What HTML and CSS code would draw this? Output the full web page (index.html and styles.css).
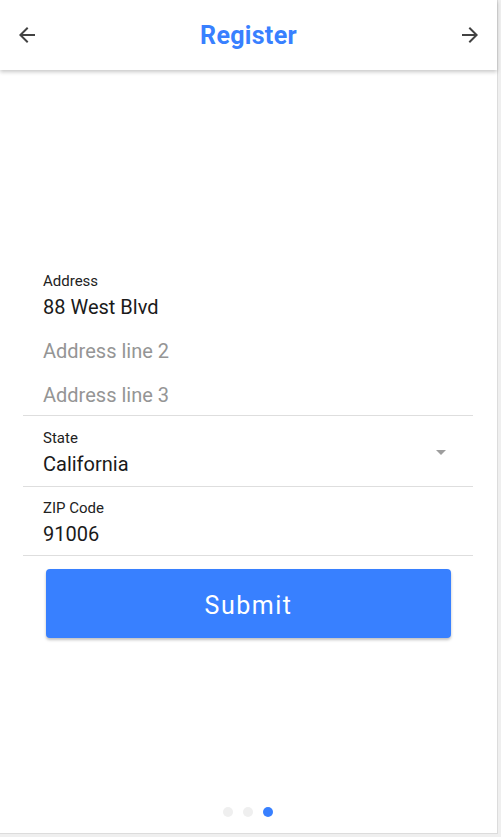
FILE: index.html
```html
<!DOCTYPE html>
<html>
<head>
<meta charset="utf-8">
<link rel="stylesheet" href="styles.css">
</head>
<body>
<div class="frame">
  <header class="header">
    <button class="nav-btn" aria-label="Back">
      <svg viewBox="0 0 24 24" width="24" height="24"><path d="M20 11H7.83l5.59-5.59L12 4l-8 8 8 8 1.41-1.41L7.83 13H20v-2z" fill="#424242"/></svg>
    </button>
    <h1 class="title">Register</h1>
    <button class="nav-btn" aria-label="Forward">
      <svg viewBox="0 0 24 24" width="24" height="24"><path d="M12 4l-1.41 1.41L16.17 11H4v2h12.17l-5.58 5.59L12 20l8-8z" fill="#424242"/></svg>
    </button>
  </header>
  <main class="main">
    <form class="form">
      <div class="field first">
        <div class="label">Address</div>
        <div class="value">88 West Blvd</div>
        <div class="value placeholder gap">Address line 2</div>
        <div class="value placeholder gap">Address line 3</div>
      </div>
      <div class="field select">
        <div class="field-body">
          <div class="label">State</div>
          <div class="value">California</div>
        </div>
        <svg class="caret" viewBox="0 0 24 24" width="24" height="24"><path d="M7 10l5 5 5-5z" fill="#9e9e9e"/></svg>
      </div>
      <div class="field last">
        <div class="label">ZIP Code</div>
        <div class="value">91006</div>
      </div>
      <button type="button" class="submit">Submit</button>
    </form>
    <div class="dots">
      <span class="dot"></span>
      <span class="dot"></span>
      <span class="dot active"></span>
    </div>
  </main>
</div>
</body>
</html>
```
FILE: styles.css
```css
html, body {
  margin: 0;
  padding: 0;
}
body {
  background: #efefef;
  font-family: Roboto, "Noto Sans", Arial, sans-serif;
  width: 501px;
  height: 837px;
  overflow: hidden;
}
.frame {
  width: 497px;
  height: 833px;
  background: #fff;
  border-right: 1px solid #dcdcdc;
  border-bottom: 1px solid #dcdcdc;
  display: flex;
  flex-direction: column;
}
.header {
  height: 70px;
  flex: none;
  display: flex;
  align-items: center;
  justify-content: space-between;
  padding: 0 15px 0 15px;
  box-shadow: 0 2px 4px rgba(0,0,0,0.22);
  position: relative;
  z-index: 1;
}
.nav-btn {
  background: none;
  border: 0;
  padding: 0;
  width: 24px;
  height: 24px;
  display: flex;
}
.title {
  margin: 0;
  font-size: 25px;
  font-weight: 700;
  color: #3880ff;
  letter-spacing: 0.3px;
}
.main {
  flex: 1;
  display: flex;
  flex-direction: column;
  padding-top: 190px;
}
.form {
  margin: 0 24px 0 23px;
  display: flex;
  flex-direction: column;
}
.field {
  padding: 14px 0 10px 20px;
  border-bottom: 1px solid #dedede;
}
.field.first {
  padding-top: 13px;
  padding-bottom: 8px;
}
.field.last {
  padding-top: 13px;
  padding-bottom: 9px;
}
.field.select {
  display: flex;
  align-items: flex-start;
  padding-right: 20px;
}
.field-body {
  flex: 1;
}
.caret {
  margin-top: 10px;
}
.label {
  font-size: 15px;
  line-height: 16px;
  color: #222;
}
.value {
  font-size: 20px;
  line-height: 24px;
  color: #1a1a1a;
  margin-top: 6px;
}
.value.gap {
  margin-top: 20px;
}
.placeholder {
  color: #959595;
}
.submit {
  margin: 13px 22px 0 23px;
  height: 69px;
  border: 0;
  border-radius: 4px;
  background: #3880ff;
  color: #fff;
  font-family: Roboto, "Noto Sans", Arial, sans-serif;
  font-size: 25px;
  letter-spacing: 1.5px;
  padding: 4px 0 0 0;
  box-shadow: 0 2px 3px rgba(0,0,0,0.25);
}
.dots {
  margin-top: auto;
  padding-bottom: 16px;
  display: flex;
  justify-content: center;
  gap: 10px;
  padding-right: 1px;
}
.dot {
  width: 10px;
  height: 10px;
  border-radius: 50%;
  background: #efefef;
}
.dot.active {
  background: #3880ff;
}
```
